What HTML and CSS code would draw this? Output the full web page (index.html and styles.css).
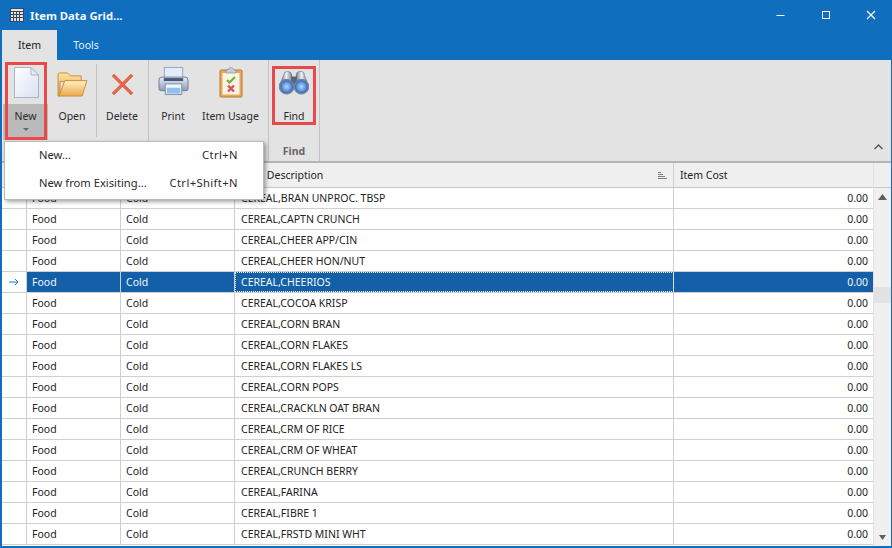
FILE: index.html
```html
<!DOCTYPE html>
<html lang="en">
<head>
<meta charset="utf-8">
<title>Item Data Grid...</title>
<link rel="stylesheet" href="styles.css">
</head>
<body>
<div class="window">
  <header class="titlebar">
    <svg class="app-icon" width="14" height="14" viewBox="0 0 14 14"><rect x="0.5" y="0.5" width="13" height="13" fill="#dfe3ea" stroke="#3b4656"/><path d="M0 3.5H14M0 6.5H14M0 9.5H14M3.5 3V14M6.5 3V14M9.5 3V14" stroke="#3b4656" stroke-width="1"/></svg>
    <span class="title">Item Data Grid...</span>
    <div class="winbtns">
      <svg width="10" height="10" viewBox="0 0 10 10"><path d="M1.5 5.5H9.5" stroke="#fff" stroke-width="1"/></svg>
      <svg width="10" height="10" viewBox="0 0 10 10"><rect x="1.5" y="1.5" width="7" height="7" fill="none" stroke="#fff" stroke-width="1"/></svg>
      <svg width="10" height="10" viewBox="0 0 10 10"><path d="M1 1L9 9M9 1L1 9" stroke="#fff" stroke-width="1.3"/></svg>
    </div>
  </header>
  <nav class="tabs">
    <div class="tab active">Item</div>
    <div class="tab">Tools</div>
  </nav>
  <section class="ribbon">
    <div class="group g1">
      <div class="buttons">
        <div class="btn btn-new">
          <div class="new-top">
            <svg width="25" height="31" viewBox="0 0 25 31"><defs><linearGradient id="pg" x1="0" y1="0" x2="1" y2="1"><stop offset="0" stop-color="#ffffff"/><stop offset="1" stop-color="#d8e0f2"/></linearGradient></defs><path d="M.5 .5H17L24.500 8V30.500H.5Z" fill="url(#pg)" stroke="#a9b3cc"/><path d="M17 .5V8H24.500Z" fill="#e6eaf3" stroke="#a9b3cc"/></svg>
          </div>
          <div class="new-bottom"><span>New</span><i class="caret"></i></div>
        </div>
        <div class="btn btn-open">
          <svg class="ico" width="31" height="25" viewBox="0 0 32 26"><defs><linearGradient id="fb" x1="0" y1="0" x2="0" y2="1"><stop offset="0" stop-color="#fde3a0"/><stop offset="1" stop-color="#e3a13f"/></linearGradient><linearGradient id="ff" x1="0" y1="0" x2="0" y2="1"><stop offset="0" stop-color="#fff0c4"/><stop offset="1" stop-color="#eda94a"/></linearGradient></defs><path d="M1 3Q1 1 3 1H11L14 4H25V10H3V25H1Z" fill="url(#fb)" stroke="#c98d3a"/><path d="M2 25L8 9H31L26 25Z" fill="url(#ff)" stroke="#c98d3a"/></svg>
          <span>Open</span>
        </div>
        <div class="vsep"></div>
        <div class="btn btn-delete">
          <svg class="ico" width="25" height="25" viewBox="0 0 26 26"><path d="M3 3L23 23M23 3L3 23" stroke="#e2664a" stroke-width="3.6"/></svg>
          <span>Delete</span>
        </div>
      </div>
    </div>
    <div class="group g2">
      <div class="buttons">
        <div class="btn btn-print">
          <svg class="ico" width="31" height="30" viewBox="0 0 32 30"><defs><linearGradient id="pb" x1="0" y1="0" x2="0" y2="1"><stop offset="0" stop-color="#e8edf6"/><stop offset="1" stop-color="#8c9ab8"/></linearGradient></defs><rect x="6.5" y="1" width="19" height="13" fill="#e6ebf8" stroke="#94a3c2"/><path d="M4 11H28Q31 11 31 14V23Q31 25 29 25H3Q1 25 1 23V14Q1 11 4 11Z" fill="url(#pb)" stroke="#6f7f9f"/><rect x="6" y="12" width="20" height="3" fill="#4a5674"/><rect x="7.5" y="18" width="17" height="11" fill="#eef5fc" stroke="#7e8fae"/><rect x="9" y="22" width="14" height="6" fill="#8fc1ea"/></svg>
          <span>Print</span>
        </div>
        <div class="btn btn-usage">
          <svg class="ico" width="24" height="31" viewBox="0 0 24 31"><rect x="1" y="3" width="22" height="27" rx="1" fill="#e8a85a" stroke="#b97c33"/><rect x="3.5" y="6" width="17" height="21.5" fill="#fbf3e4"/><path d="M7 3H9Q10 0.5 12 0.5T15 3H17V6H7Z" fill="#c9cdd4" stroke="#8a8f99" stroke-width="0.7"/><path d="M8 13L10.5 15.500L16 10" fill="none" stroke="#6fae3c" stroke-width="2.2"/><path d="M9 18.500L15 24.500M15 18.500L9 24.500" stroke="#d1525a" stroke-width="2.4"/></svg>
          <span>Item Usage</span>
        </div>
      </div>
    </div>
    <div class="group g3">
      <div class="buttons">
        <div class="btn btn-find">
          <svg class="ico" width="30" height="24" viewBox="0 0 32 26"><defs><radialGradient id="lens" cx="0.5" cy="0.5" r="0.5"><stop offset="0" stop-color="#b7d6f8"/><stop offset="0.6" stop-color="#5c94de"/><stop offset="0.78" stop-color="#3f6fb4"/><stop offset="1" stop-color="#8d97aa"/></radialGradient><linearGradient id="barrel" x1="0" y1="0" x2="1" y2="0"><stop offset="0" stop-color="#5d6880"/><stop offset="0.5" stop-color="#f0f3f8"/><stop offset="1" stop-color="#626d84"/></linearGradient></defs><path d="M5 4Q5 0.5 9 0.5T13.500 4L14.500 14H1Z" fill="url(#barrel)" stroke="#59627a" stroke-width="0.6"/><path d="M18.500 4Q18.500 0.500 23 0.500T27 4L31 14H17.500Z" fill="url(#barrel)" stroke="#59627a" stroke-width="0.6"/><rect x="13" y="6" width="6" height="8" fill="#5a6478"/><circle cx="8" cy="17" r="8" fill="url(#lens)" stroke="#6d7a94"/><circle cx="24" cy="17" r="8" fill="url(#lens)" stroke="#6d7a94"/></svg>
          <span>Find</span>
        </div>
      </div>
      <div class="group-label">Find</div>
    </div>
    <svg class="collapse" width="9" height="6" viewBox="0 0 9 6"><path d="M0.500 5L4.500 1L8.500 5" fill="none" stroke="#555" stroke-width="1.400"/></svg>
  </section>
  <main class="grid">
    <div class="grid-main">
      <div class="row head">
        <div class="ind"></div>
        <div class="c c1"></div>
        <div class="c c2"></div>
        <div class="c c3">Item Description<svg class="sort" width="9" height="8" viewBox="0 0 9 8"><path d="M0 .5H3M0 2.500H5M0 4.500H7M0 6.500H9" stroke="#7c7c7c"/></svg></div>
        <div class="c c4">Item Cost</div>
      </div>
      <div class="row"><div class="ind"></div><div class="c c1">Food</div><div class="c c2">Cold</div><div class="c c3">CEREAL,BRAN UNPROC. TBSP</div><div class="c c4 num">0.00</div></div>
      <div class="row"><div class="ind"></div><div class="c c1">Food</div><div class="c c2">Cold</div><div class="c c3">CEREAL,CAPTN CRUNCH</div><div class="c c4 num">0.00</div></div>
      <div class="row"><div class="ind"></div><div class="c c1">Food</div><div class="c c2">Cold</div><div class="c c3">CEREAL,CHEER APP/CIN</div><div class="c c4 num">0.00</div></div>
      <div class="row"><div class="ind"></div><div class="c c1">Food</div><div class="c c2">Cold</div><div class="c c3">CEREAL,CHEER HON/NUT</div><div class="c c4 num">0.00</div></div>
      <div class="row selected"><div class="ind"><svg width="10" height="8" viewBox="0 0 10 8"><path d="M0 4H9M6 1L9 4L6 7" fill="none" stroke="#1f78c8"/></svg></div><div class="c c1">Food</div><div class="c c2">Cold</div><div class="c c3 focus">CEREAL,CHEERIOS</div><div class="c c4 num">0.00</div></div>
      <div class="row"><div class="ind"></div><div class="c c1">Food</div><div class="c c2">Cold</div><div class="c c3">CEREAL,COCOA KRISP</div><div class="c c4 num">0.00</div></div>
      <div class="row"><div class="ind"></div><div class="c c1">Food</div><div class="c c2">Cold</div><div class="c c3">CEREAL,CORN BRAN</div><div class="c c4 num">0.00</div></div>
      <div class="row"><div class="ind"></div><div class="c c1">Food</div><div class="c c2">Cold</div><div class="c c3">CEREAL,CORN FLAKES</div><div class="c c4 num">0.00</div></div>
      <div class="row"><div class="ind"></div><div class="c c1">Food</div><div class="c c2">Cold</div><div class="c c3">CEREAL,CORN FLAKES LS</div><div class="c c4 num">0.00</div></div>
      <div class="row"><div class="ind"></div><div class="c c1">Food</div><div class="c c2">Cold</div><div class="c c3">CEREAL,CORN POPS</div><div class="c c4 num">0.00</div></div>
      <div class="row"><div class="ind"></div><div class="c c1">Food</div><div class="c c2">Cold</div><div class="c c3">CEREAL,CRACKLN OAT BRAN</div><div class="c c4 num">0.00</div></div>
      <div class="row"><div class="ind"></div><div class="c c1">Food</div><div class="c c2">Cold</div><div class="c c3">CEREAL,CRM OF RICE</div><div class="c c4 num">0.00</div></div>
      <div class="row"><div class="ind"></div><div class="c c1">Food</div><div class="c c2">Cold</div><div class="c c3">CEREAL,CRM OF WHEAT</div><div class="c c4 num">0.00</div></div>
      <div class="row"><div class="ind"></div><div class="c c1">Food</div><div class="c c2">Cold</div><div class="c c3">CEREAL,CRUNCH BERRY</div><div class="c c4 num">0.00</div></div>
      <div class="row"><div class="ind"></div><div class="c c1">Food</div><div class="c c2">Cold</div><div class="c c3">CEREAL,FARINA</div><div class="c c4 num">0.00</div></div>
      <div class="row"><div class="ind"></div><div class="c c1">Food</div><div class="c c2">Cold</div><div class="c c3">CEREAL,FIBRE 1</div><div class="c c4 num">0.00</div></div>
      <div class="row"><div class="ind"></div><div class="c c1">Food</div><div class="c c2">Cold</div><div class="c c3">CEREAL,FRSTD MINI WHT</div><div class="c c4 num">0.00</div></div>
    </div>
    <aside class="scrollbar">
      <div class="sb-head"></div>
      <div class="sb-arrow"><svg width="9" height="6" viewBox="0 0 9 6"><path d="M0 6L4.500 0L9 6Z" fill="#5f5f5f"/></svg></div>
      <div class="sb-gap"></div>
      <div class="sb-thumb"></div>
      <div class="sb-rest"></div>
      <div class="sb-arrow"><svg width="7" height="5" viewBox="0 0 7 5"><path d="M0 0L3.500 5L7 0Z" fill="#5f5f5f"/></svg></div>
    </aside>
  </main>
  <div class="menu">
    <div class="menu-item"><span>New...</span><span class="shortcut">Ctrl+N</span></div>
    <div class="menu-item"><span>New from Exisiting...</span><span class="shortcut">Ctrl+Shift+N</span></div>
  </div>
  <div class="mark mark-new"></div>
  <div class="mark mark-find"></div>
</div>
</body>
</html>
```
FILE: styles.css
```css
* { box-sizing: border-box; }
html, body { margin: 0; padding: 0; height: 100%; overflow: hidden; }
body { font-family: "Noto Sans", "Open Sans", sans-serif; font-size: 10.5px; color: #222; }

.window { position: relative; width: 892px; height: 548px; background: #106ebe; padding: 0 1px 2px 2px; display: flex; flex-direction: column; overflow: hidden; }

.titlebar { height: 30px; display: flex; align-items: center; padding-left: 8px; color: #fff; flex: none; }
.app-icon { margin-right: 6px; }
.title { font-weight: 700; font-size: 11.25px; color: #f2f7fc; }
.winbtns { margin-left: auto; width: 116px; display: flex; justify-content: space-between; padding-right: 15px; }

.tabs { height: 30px; display: flex; flex: none; }
.tab { width: 55px; display: flex; align-items: center; justify-content: center; color: #e6f0f8; padding-bottom: 1px; }
.tab.active { background: #e3e3e3; color: #222; }
.tab + .tab { width: 58px; }

.ribbon { position: relative; height: 103px; background: #e3e3e3; display: flex; flex: none; border-bottom: 2px solid #b4b4b4; }
.group { border-right: 1px solid #c4c4c4; height: 101px; position: relative; }
.g1 { width: 147px; }
.g2 { width: 120px; }
.g3 { width: 51px; }
.buttons { display: flex; height: 80px; padding-top: 3px; }
.btn { display: flex; flex-direction: column; align-items: center; height: 77px; color: #2a2a2a; }
.btn span { line-height: 14px; }
.btn .ico { display: block; }
.btn-new { width: 45px; margin-left: 1px; }
.new-top { height: 41px; width: 100%; display: flex; justify-content: center; padding-top: 4px; padding-left: 1px; }
.new-bottom { height: 36px; width: 100%; background: #bababa; display: flex; flex-direction: column; align-items: center; padding-top: 5px; }
.caret { display: block; margin-top: 5px; width: 0; height: 0; border: 3px solid transparent; border-top: 3px solid #666; border-bottom: 0; }
.btn-open { width: 48px; padding-top: 9px; }
.btn-open span { margin-top: 12px; }
.vsep { width: 1px; height: 73px; background: #c4c4c4; margin-top: 1px; }
.btn-delete { width: 50px; padding-top: 9px; }
.btn-delete span { margin-top: 12px; }
.btn-print { width: 48px; padding-top: 3px; }
.btn-print span { margin-top: 13px; }
.btn-usage { width: 67px; padding-top: 4px; }
.btn-usage span { margin-top: 11px; white-space: nowrap; }
.btn-find { width: 50px; padding-top: 8px; }
.btn-find span { margin-top: 14px; }
.group-label { text-align: center; font-weight: 700; color: #666; line-height: 14px; padding-top: 4px; }
.collapse { position: absolute; right: 8px; top: 84px; }

.grid { flex: 1; display: flex; background: #fff; overflow: hidden; min-height: 0; }
.grid-main { width: 871px; flex: none; }
.row { display: flex; height: 21px; border-bottom: 1px solid #cfcfcf; background: #fff; }
.row.head { height: 25px; background: #efefef; border-bottom: 1px solid #c8c8c8; align-items: stretch; }
.ind { width: 25px; flex: none; display: flex; align-items: center; justify-content: flex-start; padding-left: 7px; border-right: 1px solid #cfcfcf; background: #fff; }
.head .ind { background: #efefef; }
.c { padding: 0 5px 1px; display: flex; align-items: center; border-right: 1px solid #cfcfcf; white-space: nowrap; color: #222; }
.c1 { width: 94px; }
.c2 { width: 114px; }
.c3 { width: 439px; position: relative; padding-left: 6px; }
.c4 { width: 199px; border-right: 0; padding-left: 6px; }
.num { justify-content: flex-end; }
.sort { position: absolute; right: 6px; top: 9px; }
.selected .c { background: #1460a8; color: #f2f6fa; }
.selected .focus { outline: 1px dotted #e8eef4; outline-offset: -1px; }

.scrollbar { flex: 1; min-height: 0; background: #f0f0f0; display: flex; flex-direction: column; border-left: 1px solid #e2e2e2; }
.sb-head { height: 25px; background: #efefef; border-bottom: 1px solid #c8c8c8; flex: none; }
.sb-arrow { height: 17px; display: flex; align-items: center; justify-content: center; flex: none; }
.sb-gap { height: 82px; flex: none; }
.sb-thumb { height: 16px; background: #e2e2e2; flex: none; }
.sb-rest { flex: 1; }

.menu { position: absolute; left: 4px; top: 141px; width: 260px; height: 59px; background: #fff; border: 1px solid #b9b9b9; box-shadow: 2px 2px 4px rgba(0,0,0,.35); padding: 0 25px 0 34px; font-size: 11.2px; }
.menu-item { height: 28px; display: flex; justify-content: space-between; align-items: center; padding-bottom: 3px; color: #2a2a2a; white-space: nowrap; }
.shortcut { letter-spacing: .4px; }

.mark { position: absolute; border: 3px solid #e8494a; pointer-events: none; }
.mark-new { left: 5px; top: 62px; width: 42px; height: 78px; }
.mark-find { left: 272px; top: 66px; width: 44px; height: 59px; }
```
